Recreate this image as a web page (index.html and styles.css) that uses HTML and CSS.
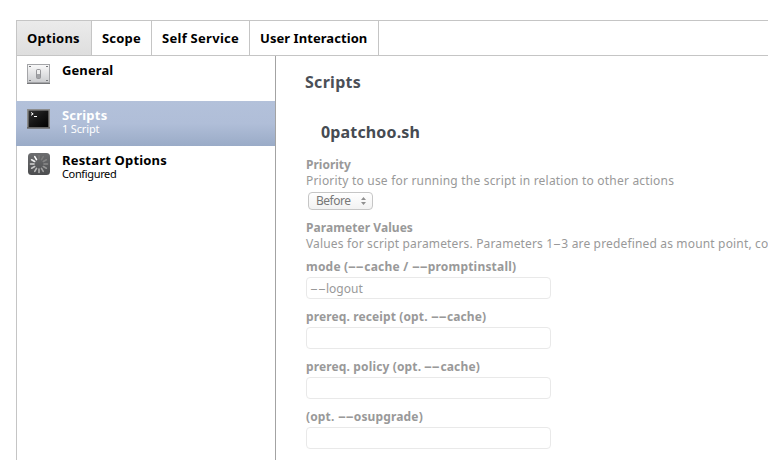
FILE: index.html
```html
<!DOCTYPE html>
<html lang="en">
<head>
<meta charset="utf-8">
<title>Scripts</title>
<link rel="stylesheet" href="styles.css">
</head>
<body>
<main class="frame">
  <nav class="tabs">
    <a class="tab tab-options">Options</a>
    <a class="tab tab-scope">Scope</a>
    <a class="tab tab-self">Self Service</a>
    <a class="tab tab-user">User Interaction</a>
  </nav>
  <div class="body">
    <aside class="sidebar">
      <div class="item">
        <svg class="icon" width="24" height="24" viewBox="0 0 24 24">
          <defs><linearGradient id="plate" x2="0" y2="1"><stop stop-color="#fafafa"/><stop offset="1" stop-color="#cbcccf"/></linearGradient></defs>
          <rect x=".5" y="1.5" width="22" height="18" fill="url(#plate)" stroke="#a4a5a8"/>
          <path d="M0 20.500h23" stroke="#77787a"/>
          <path d="M2 3.500h2M19 3.500h2M2 17.500h2M19 17.500h2" stroke="#77797c" stroke-width="1"/>
          <rect x="9.500" y="6.500" width="4" height="9" rx="1" fill="#a2a3a6" stroke="#8b8c8f" stroke-width=".8"/>
          <rect x="10" y="7" width="3" height="4" fill="#eee"/>
        </svg>
        <div class="copy"><div class="name">General</div></div>
      </div>
      <div class="item active">
        <svg class="icon" width="24" height="24" viewBox="0 0 24 24">
          <defs><linearGradient id="term" x2="1" y2="1"><stop stop-color="#333"/><stop offset=".5" stop-color="#151515"/><stop offset="1" stop-color="#000"/></linearGradient></defs>
          <rect x=".8" y="2.800" width="21.400" height="18" fill="url(#term)" stroke="#8b8b8b" stroke-width="1.600"/>
          <path d="M0 20.800h23" stroke="#606060" stroke-width="1.400"/>
          <path d="M4 5.500l2.200 1.400L4 8.300M7 9.500h3" fill="none" stroke="#fff"/>
        </svg>
        <div class="copy"><div class="name name-scripts">Scripts</div><div class="sub">1 Script</div></div>
      </div>
      <div class="item">
        <svg class="icon" width="24" height="24" viewBox="0 0 24 24">
          <defs><linearGradient id="spin" x2="0" y2="1"><stop stop-color="#6d6e70"/><stop offset="1" stop-color="#4c4d4f"/></linearGradient></defs>
          <rect x="1" y="1" width="22" height="22" rx="3.500" fill="url(#spin)"/>
          <g stroke-width="1.600" stroke-linecap="round" transform="translate(12 12)">
            <path d="M0-5V-8.500" stroke="#777"/><path d="M0-5V-8.500" transform="rotate(30)" stroke="#7c7c7c"/>
            <path d="M0-5V-8.500" transform="rotate(60)" stroke="#838383"/><path d="M0-5V-8.500" transform="rotate(90)" stroke="#8b8b8b"/>
            <path d="M0-5V-8.500" transform="rotate(120)" stroke="#959595"/><path d="M0-5V-8.500" transform="rotate(150)" stroke="#a0a0a0"/>
            <path d="M0-5V-8.500" transform="rotate(180)" stroke="#acacac"/><path d="M0-5V-8.500" transform="rotate(210)" stroke="#b8b8b8"/>
            <path d="M0-5V-8.500" transform="rotate(240)" stroke="#c6c6c6"/><path d="M0-5V-8.500" transform="rotate(270)" stroke="#d6d6d6"/>
            <path d="M0-5V-8.500" transform="rotate(300)" stroke="#eee"/><path d="M0-5V-8.500" transform="rotate(330)" stroke="#fff"/>
          </g>
        </svg>
        <div class="copy"><div class="name name-restart">Restart Options</div><div class="sub sub-configured">Configured</div></div>
      </div>
    </aside>
    <section class="content">
      <h1 class="title">Scripts</h1>
      <h2 class="script">0patchoo.sh</h2>
      <div class="label">Priority</div>
      <div class="help help-priority">Priority to use for running the script in relation to other actions</div>
      <div class="select"><span>Before</span>
        <svg width="5" height="8" viewBox="0 0 5 8"><path d="M2.500 0L5 3H0zM2.500 8L0 5h5z" fill="#909090"/></svg>
      </div>
      <div class="label label-params">Parameter Values</div>
      <div class="help help-params">Values for script parameters. Parameters 1<span class="dash dash-one">-</span>3 are predefined as mount point, co</div>
      <div class="label field-label label-mode">mode (<span class="dash">--</span>cache / <span class="dash">--</span>promptinstall)</div>
      <div class="field"><span class="dash">--</span>logout</div>
      <div class="label field-label label-receipt">prereq. receipt (opt. <span class="dash">--</span>cache)</div>
      <div class="field"></div>
      <div class="label field-label label-policy">prereq. policy (opt. <span class="dash">--</span>cache)</div>
      <div class="field"></div>
      <div class="label field-label label-upgrade">(opt. <span class="dash">--</span>osupgrade)</div>
      <div class="field"></div>
    </section>
  </div>
</main>
</body>
</html>
```
FILE: styles.css
```css
* { box-sizing: border-box; }
body { margin: 0; height: 460px; overflow: hidden; background: #fff; color: #000; font-family: "Noto Sans", "Open Sans", sans-serif; }
.frame { margin: 20px 0 0 16px; height: 440px; border-top: 1px solid #c5c5c5; border-left: 1px solid #c5c5c5; display: flex; flex-direction: column; }
.tabs { display: flex; height: 35px; flex: none; border-bottom: 1px solid #c5c5c5; }
.tab { height: 34px; padding-left: 10px; border-right: 1px solid #c5c5c5; font-size: 13px; font-weight: 700; line-height: 35px; white-space: nowrap; }
.tab-options { width: 75px; background: linear-gradient(#ebebeb, #dedede); letter-spacing: .25px; }
.tab-scope { width: 60px; letter-spacing: .2px; }
.tab-self { width: 98px; letter-spacing: .28px; }
.tab-user { width: 129px; letter-spacing: .06px; }
.body { display: flex; flex: 1; min-height: 0; }
.sidebar { width: 259px; flex: none; border-right: 1px solid #a3a3a3; }
.item { height: 45px; display: flex; padding: 7px 0 0 10px; gap: 11px; }
.active { margin-left: -1px; padding-left: 11px; color: #fff; background: linear-gradient(#b3c1da 0%, #b0bed8 50%, #9aabc7 100%); }
.icon { flex: none; }
.item .icon { margin-top: -1px; }
.item:first-child .icon { margin-top: 0; }
.copy { white-space: nowrap; }
.name { height: 14px; font-size: 13px; line-height: 14px; font-weight: 700; letter-spacing: .1px; }
.name-scripts { letter-spacing: .2px; }
.name-restart { letter-spacing: .18px; }
.sub { font-size: 11px; line-height: 14px; letter-spacing: -.15px; }
.sub-configured { letter-spacing: -.35px; }
.content { flex: 1; min-width: 0; overflow: hidden; padding: 14px 0 0 30px; color: #999; font-size: 12px; }
.title { margin: 0 0 0 -1px; height: 25px; font-size: 16px; line-height: 24px; letter-spacing: .3px; color: #4b4f57; }
.script { margin: 26px 0 0 15px; height: 22px; font-size: 16px; line-height: 22px; letter-spacing: .15px; color: #464b52; }
.label { height: 16px; font-weight: 700; line-height: 16px; white-space: nowrap; }
.script + .label { margin-top: 14px; }
.help { height: 16px; line-height: 16px; white-space: nowrap; }
.help-priority { letter-spacing: .2px; }
.help-params { letter-spacing: .16px; }
.select { display: flex; align-items: center; justify-content: space-between; width: 65px; height: 18px; margin: 3px 0 0 2px; padding: 0 6px 0 7px; border: 1px solid #c6c6c6; border-radius: 4px; background: linear-gradient(#fff, #f2f2f2); color: #777; letter-spacing: -.5px; line-height: 16px; }
.label-params { margin-top: 10px; letter-spacing: .06px; }
.field-label { margin-top: 10px; }
.label-params + .help + .field-label { margin-top: 7px; }
.label-mode { letter-spacing: .2px; }
.label-receipt { letter-spacing: .12px; }
.label-policy { letter-spacing: .14px; }
.label-upgrade { letter-spacing: .15px; }
.dash { display: inline-block; width: 16px; letter-spacing: 0; transform: scaleX(2.050); transform-origin: 0 50%; }
.dash-one { width: 8px; }
.field { width: 245px; height: 22px; margin-top: 2px; border: 1px solid #e9e9e9; border-radius: 4px; padding-left: 3px; line-height: 21px; letter-spacing: 0; white-space: nowrap; }
```
